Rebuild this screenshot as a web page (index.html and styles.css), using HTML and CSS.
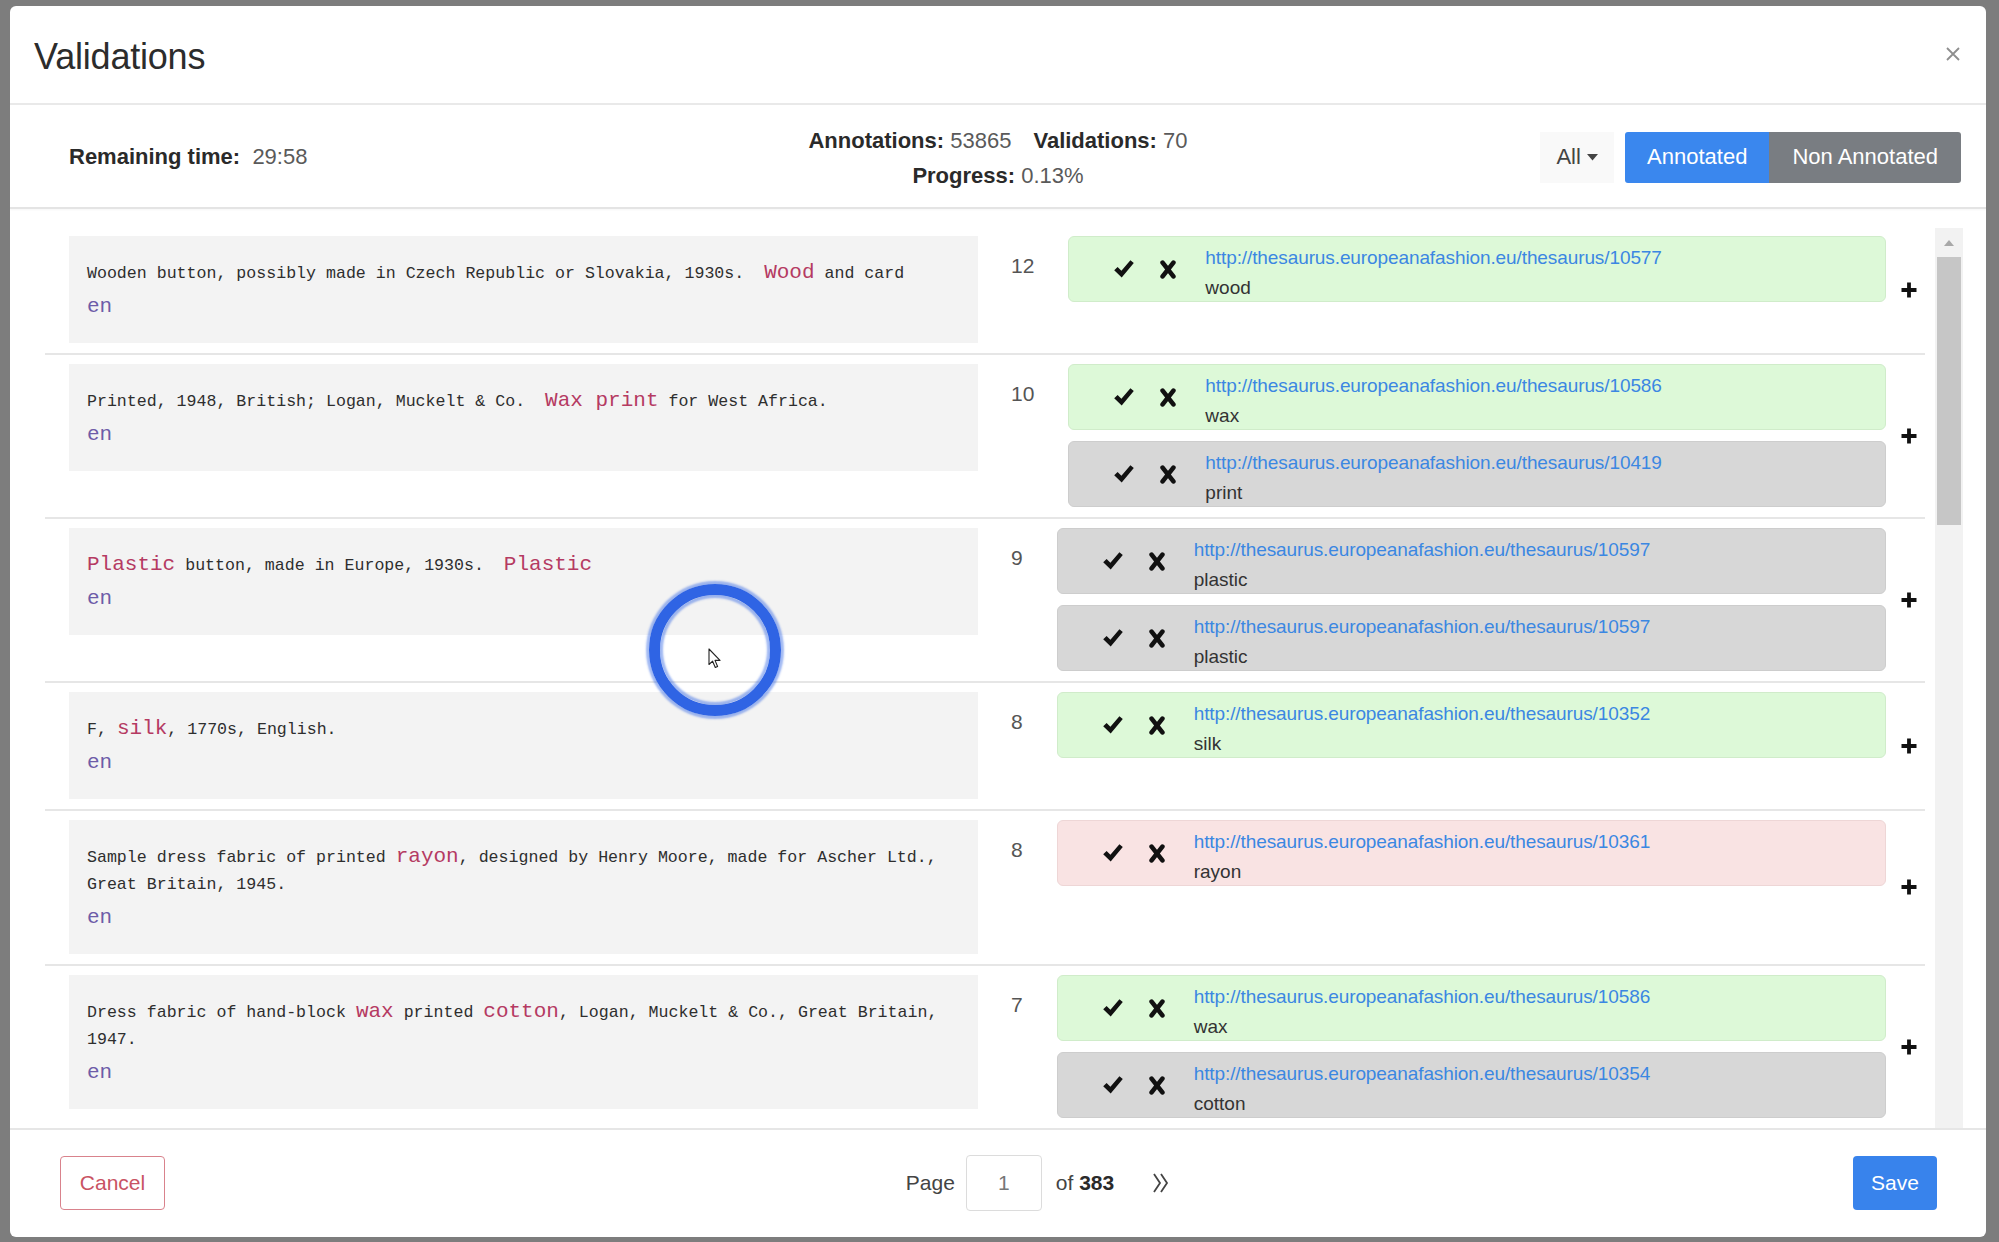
FILE: index.html
```html
<!DOCTYPE html>
<html lang="en">
<head>
<meta charset="utf-8">
<title>Validations</title>
<link rel="stylesheet" href="styles.css">
</head>
<body>
<div class="modal">
  <div class="modal-header">
    <h5 class="title">Validations</h5>
    <span class="close"><svg width="14" height="14" viewBox="0 0 14 14"><path d="M1 1L13 13M13 1L1 13" stroke="#8e8e8e" stroke-width="1.8"/></svg></span>
  </div>

  <div class="stats">
    <div class="time"><b>Remaining time:</b>&nbsp; <span class="val">29:58</span></div>
    <div class="counts">
      <div><b>Annotations:</b> <span class="val">53865</span><b class="gap">Validations:</b> <span class="val">70</span></div>
      <div><b>Progress:</b> <span class="val">0.13%</span></div>
    </div>
    <div class="filters">
      <span class="all">All <svg width="11" height="7" viewBox="0 0 11 7"><path d="M0 0H11L5.5 6.5Z" fill="#444"/></svg></span>
      <span class="btn btn-blue">Annotated</span><span class="btn btn-grey">Non Annotated</span>
    </div>
  </div>

  <div class="modal-body">
    <div class="list">

      <div class="row">
        <div class="textbox">
          <div class="desc">Wooden button, possibly made in Czech Republic or Slovakia, 1930s.  <span class="hl">Wood</span> and card</div>
          <div class="lang">en</div>
        </div>
        <div class="count">12</div>
        <div class="anns">
          <div class="ann green">
            <svg class="ico-check" width="22" height="20" viewBox="0 0 22 20"><path d="M1.2 11.2L4.6 7.9L8.4 11.8L17.4 1.2L20.8 4L8.7 18.6Z" fill="#111"/></svg>
            <svg class="ico-x" width="16" height="19" viewBox="0 0 16 19"><path d="M2.6 2.6L13.4 16.4M13.4 2.6L2.6 16.4" stroke="#111" stroke-width="4.6" stroke-linecap="round"/></svg>
            <div class="ann-text"><a class="url">http://thesaurus.europeanafashion.eu/thesaurus/10577</a><div class="label">wood</div></div>
          </div>
        </div>
        <div class="plus"><svg width="18" height="18" viewBox="0 0 18 18"><path d="M9 1.5V16.5M1.5 9H16.5" stroke="#111" stroke-width="3.8"/></svg></div>
      </div>

      <div class="row">
        <div class="textbox">
          <div class="desc">Printed, 1948, British; Logan, Muckelt &amp; Co.  <span class="hl">Wax print</span> for West Africa.</div>
          <div class="lang">en</div>
        </div>
        <div class="count">10</div>
        <div class="anns">
          <div class="ann green">
            <svg class="ico-check" width="22" height="20" viewBox="0 0 22 20"><path d="M1.2 11.2L4.6 7.9L8.4 11.8L17.4 1.2L20.8 4L8.7 18.6Z" fill="#111"/></svg>
            <svg class="ico-x" width="16" height="19" viewBox="0 0 16 19"><path d="M2.6 2.6L13.4 16.4M13.4 2.6L2.6 16.4" stroke="#111" stroke-width="4.6" stroke-linecap="round"/></svg>
            <div class="ann-text"><a class="url">http://thesaurus.europeanafashion.eu/thesaurus/10586</a><div class="label">wax</div></div>
          </div>
          <div class="ann grey">
            <svg class="ico-check" width="22" height="20" viewBox="0 0 22 20"><path d="M1.2 11.2L4.6 7.9L8.4 11.8L17.4 1.2L20.8 4L8.7 18.6Z" fill="#111"/></svg>
            <svg class="ico-x" width="16" height="19" viewBox="0 0 16 19"><path d="M2.6 2.6L13.4 16.4M13.4 2.6L2.6 16.4" stroke="#111" stroke-width="4.6" stroke-linecap="round"/></svg>
            <div class="ann-text"><a class="url">http://thesaurus.europeanafashion.eu/thesaurus/10419</a><div class="label">print</div></div>
          </div>
        </div>
        <div class="plus"><svg width="18" height="18" viewBox="0 0 18 18"><path d="M9 1.5V16.5M1.5 9H16.5" stroke="#111" stroke-width="3.8"/></svg></div>
      </div>

      <div class="row">
        <div class="textbox">
          <div class="desc"><span class="hl">Plastic</span> button, made in Europe, 1930s.  <span class="hl">Plastic</span></div>
          <div class="lang">en</div>
        </div>
        <div class="count">9</div>
        <div class="anns">
          <div class="ann grey">
            <svg class="ico-check" width="22" height="20" viewBox="0 0 22 20"><path d="M1.2 11.2L4.6 7.9L8.4 11.8L17.4 1.2L20.8 4L8.7 18.6Z" fill="#111"/></svg>
            <svg class="ico-x" width="16" height="19" viewBox="0 0 16 19"><path d="M2.6 2.6L13.4 16.4M13.4 2.6L2.6 16.4" stroke="#111" stroke-width="4.6" stroke-linecap="round"/></svg>
            <div class="ann-text"><a class="url">http://thesaurus.europeanafashion.eu/thesaurus/10597</a><div class="label">plastic</div></div>
          </div>
          <div class="ann grey">
            <svg class="ico-check" width="22" height="20" viewBox="0 0 22 20"><path d="M1.2 11.2L4.6 7.9L8.4 11.8L17.4 1.2L20.8 4L8.7 18.6Z" fill="#111"/></svg>
            <svg class="ico-x" width="16" height="19" viewBox="0 0 16 19"><path d="M2.6 2.6L13.4 16.4M13.4 2.6L2.6 16.4" stroke="#111" stroke-width="4.6" stroke-linecap="round"/></svg>
            <div class="ann-text"><a class="url">http://thesaurus.europeanafashion.eu/thesaurus/10597</a><div class="label">plastic</div></div>
          </div>
        </div>
        <div class="plus"><svg width="18" height="18" viewBox="0 0 18 18"><path d="M9 1.5V16.5M1.5 9H16.5" stroke="#111" stroke-width="3.8"/></svg></div>
      </div>

      <div class="row">
        <div class="textbox">
          <div class="desc">F, <span class="hl">silk</span>, 1770s, English.</div>
          <div class="lang">en</div>
        </div>
        <div class="count">8</div>
        <div class="anns">
          <div class="ann green">
            <svg class="ico-check" width="22" height="20" viewBox="0 0 22 20"><path d="M1.2 11.2L4.6 7.9L8.4 11.8L17.4 1.2L20.8 4L8.7 18.6Z" fill="#111"/></svg>
            <svg class="ico-x" width="16" height="19" viewBox="0 0 16 19"><path d="M2.6 2.6L13.4 16.4M13.4 2.6L2.6 16.4" stroke="#111" stroke-width="4.6" stroke-linecap="round"/></svg>
            <div class="ann-text"><a class="url">http://thesaurus.europeanafashion.eu/thesaurus/10352</a><div class="label">silk</div></div>
          </div>
        </div>
        <div class="plus"><svg width="18" height="18" viewBox="0 0 18 18"><path d="M9 1.5V16.5M1.5 9H16.5" stroke="#111" stroke-width="3.8"/></svg></div>
      </div>

      <div class="row">
        <div class="textbox">
          <div class="desc">Sample dress fabric of printed <span class="hl">rayon</span>, designed by Henry Moore, made for Ascher Ltd., Great Britain, 1945.</div>
          <div class="lang">en</div>
        </div>
        <div class="count">8</div>
        <div class="anns">
          <div class="ann pink">
            <svg class="ico-check" width="22" height="20" viewBox="0 0 22 20"><path d="M1.2 11.2L4.6 7.9L8.4 11.8L17.4 1.2L20.8 4L8.7 18.6Z" fill="#111"/></svg>
            <svg class="ico-x" width="16" height="19" viewBox="0 0 16 19"><path d="M2.6 2.6L13.4 16.4M13.4 2.6L2.6 16.4" stroke="#111" stroke-width="4.6" stroke-linecap="round"/></svg>
            <div class="ann-text"><a class="url">http://thesaurus.europeanafashion.eu/thesaurus/10361</a><div class="label">rayon</div></div>
          </div>
        </div>
        <div class="plus"><svg width="18" height="18" viewBox="0 0 18 18"><path d="M9 1.5V16.5M1.5 9H16.5" stroke="#111" stroke-width="3.8"/></svg></div>
      </div>

      <div class="row">
        <div class="textbox">
          <div class="desc">Dress fabric of hand-block <span class="hl">wax</span> printed <span class="hl">cotton</span>, Logan, Muckelt &amp; Co., Great Britain, 1947.</div>
          <div class="lang">en</div>
        </div>
        <div class="count">7</div>
        <div class="anns">
          <div class="ann green">
            <svg class="ico-check" width="22" height="20" viewBox="0 0 22 20"><path d="M1.2 11.2L4.6 7.9L8.4 11.8L17.4 1.2L20.8 4L8.7 18.6Z" fill="#111"/></svg>
            <svg class="ico-x" width="16" height="19" viewBox="0 0 16 19"><path d="M2.6 2.6L13.4 16.4M13.4 2.6L2.6 16.4" stroke="#111" stroke-width="4.6" stroke-linecap="round"/></svg>
            <div class="ann-text"><a class="url">http://thesaurus.europeanafashion.eu/thesaurus/10586</a><div class="label">wax</div></div>
          </div>
          <div class="ann grey">
            <svg class="ico-check" width="22" height="20" viewBox="0 0 22 20"><path d="M1.2 11.2L4.6 7.9L8.4 11.8L17.4 1.2L20.8 4L8.7 18.6Z" fill="#111"/></svg>
            <svg class="ico-x" width="16" height="19" viewBox="0 0 16 19"><path d="M2.6 2.6L13.4 16.4M13.4 2.6L2.6 16.4" stroke="#111" stroke-width="4.6" stroke-linecap="round"/></svg>
            <div class="ann-text"><a class="url">http://thesaurus.europeanafashion.eu/thesaurus/10354</a><div class="label">cotton</div></div>
          </div>
        </div>
        <div class="plus"><svg width="18" height="18" viewBox="0 0 18 18"><path d="M9 1.5V16.5M1.5 9H16.5" stroke="#111" stroke-width="3.8"/></svg></div>
      </div>

    </div>
    <div class="scrollbar">
      <div class="sb-arrow"><svg width="10" height="6" viewBox="0 0 10 6"><path d="M0 6L5 0L10 6Z" fill="#a8a8a8"/></svg></div>
      <div class="sb-thumb"></div>
    </div>
  </div>

  <div class="modal-footer">
    <span class="btn-cancel">Cancel</span>
    <div class="pager">
      <span>Page</span>
      <span class="page-input">1</span>
      <span>of <b>383</b></span>
      <svg class="next" width="18" height="22" viewBox="0 0 18 22"><path d="M2 2L8 11L2 20M9 2L15 11L9 20" stroke="#444" stroke-width="1.8" fill="none"/></svg>
    </div>
    <span class="btn-save">Save</span>
  </div>

  <div class="click-ring"></div>
  <svg class="cursor" width="14" height="21" viewBox="0 0 14 21"><path d="M1 1V16.5L4.6 13.2L7.3 19.5L9.6 18.5L7 12.4H12Z" fill="#fff" stroke="#222" stroke-width="1.1" stroke-linejoin="round"/></svg>
</div>
</body>
</html>
```

FILE: styles.css
```css
* { box-sizing: border-box; }

html, body {
  margin: 0;
  height: 1242px;
  overflow: hidden;
}

body {
  background: #7d7d7d;
  padding: 6px 13px 5px 10px;
  font-family: "Liberation Sans", Arial, sans-serif;
  color: #333;
}

.modal {
  position: relative;
  height: 1231px;
  background: #fff;
  border-radius: 6px;
  display: flex;
  flex-direction: column;
  overflow: hidden;
}

/* header */
.modal-header {
  height: 99px;
  flex: none;
  display: flex;
  align-items: center;
  justify-content: space-between;
  padding: 4px 26px 0 24px;
  border-bottom: 2px solid #e9e9e9;
}

.title {
  margin: 0;
  font-size: 36px;
  font-weight: normal;
  color: #2c2c2c;
  letter-spacing: -0.2px;
}

.close {
  display: flex;
  margin-top: -6px;
}

/* stats */
.stats {
  height: 104px;
  flex: none;
  display: grid;
  grid-template-columns: 1fr auto 1fr;
  align-items: center;
  padding: 0 25px;
  border-bottom: 2px solid #e4e4e4;
  box-shadow: 0 1px 2px rgba(0,0,0,0.04);
  font-size: 22px;
}

.time { padding: 2px 0 0 34px; }

.stats b { color: #2a2a2a; }
.stats .val { color: #5a5a5a; }

.counts {
  text-align: center;
  line-height: 35px;
  margin-top: 4px;
}

.counts .gap { margin-left: 22px; }

.filters {
  display: flex;
  justify-content: flex-end;
  align-items: center;
  padding-top: 2px;
}

.all {
  width: 74px;
  height: 51px;
  display: flex;
  align-items: center;
  justify-content: center;
  gap: 6px;
  background: #f9f9f9;
  color: #444;
  margin-right: 11px;
}

.btn {
  height: 51px;
  display: flex;
  align-items: center;
  padding: 0 22px;
  color: #fff;
  font-size: 22px;
}

.btn-blue { background: #3a87ee; border-radius: 3px 0 0 3px; }
.btn-grey { background: #797d82; border-radius: 0 3px 3px 0; padding: 0 23px; }

/* body */
.modal-body {
  flex: 1;
  display: flex;
  padding-left: 35px;
  overflow: hidden;
}

.list {
  flex: 1;
  padding-top: 18px;
  overflow: hidden;
}

.row {
  display: flex;
  align-items: flex-start;
  padding: 9px 0 10px 24px;
  border-bottom: 2px solid #e6e6e6;
}

.textbox {
  width: 909px;
  flex: none;
  background: #f3f3f3;
  padding: 24px 18px 21px;
}

.desc {
  font-family: "Liberation Mono", "Courier New", monospace;
  font-size: 16.6px;
  line-height: 27px;
  white-space: pre-wrap;
  color: #2e2e2e;
}

.hl {
  font-size: 21px;
  line-height: 1;
  color: #b53a62;
}

.lang {
  margin-top: 5px;
  font-family: "Liberation Mono", "Courier New", monospace;
  font-size: 21px;
  line-height: 30px;
  color: #6d5ca8;
}

.count {
  flex: none;
  margin: 18px 34px 0 33px;
  font-size: 21px;
  line-height: 24px;
  color: #555;
}

.anns {
  flex: 1;
  display: flex;
  flex-direction: column;
  gap: 11px;
}

.ann {
  height: 66px;
  display: flex;
  align-items: center;
  padding-left: 44px;
  border: 1px solid transparent;
  border-radius: 6px;
}

.ann.green { background: #ddf9d8; border-color: #d0ecca; }
.ann.grey { background: #d7d7d7; border-color: #cdcdcd; }
.ann.pink { background: #f9e3e3; border-color: #eed6d6; }

.ico-check { flex: none; margin-right: 25px; }
.ico-x { flex: none; margin-right: 29px; }

.ann-text {
  align-self: flex-start;
  margin-top: 8px;
  font-size: 19px;
}

.url {
  display: block;
  line-height: 26px;
  color: #3b87e2;
  letter-spacing: -0.1px;
}

.label {
  margin-top: 4px;
  line-height: 26px;
  color: #333;
}

.plus {
  width: 39px;
  flex: none;
  align-self: center;
  display: flex;
  padding-left: 14px;
}

/* fake scrollbar */
.scrollbar {
  width: 28px;
  flex: none;
  margin: 19px 23px 0 10px;
  background: #f2f2f2;
  display: flex;
  flex-direction: column;
  align-items: center;
}

.sb-arrow {
  height: 29px;
  display: flex;
  align-items: center;
}

.sb-thumb {
  width: 24px;
  height: 268px;
  background: #c6c6c6;
}

/* footer */
.modal-footer {
  height: 109px;
  flex: none;
  display: flex;
  align-items: center;
  justify-content: space-between;
  padding: 0 49px 2px 50px;
  border-top: 2px solid #e6e6e6;
  font-size: 21px;
}

.btn-cancel {
  height: 54px;
  width: 105px;
  display: flex;
  align-items: center;
  justify-content: center;
  border: 1px solid #d9828c;
  border-radius: 4px;
  color: #c95363;
}

.btn-save {
  height: 54px;
  width: 84px;
  display: flex;
  align-items: center;
  justify-content: center;
  background: #3883ec;
  border-radius: 4px;
  color: #fff;
}

.pager {
  display: flex;
  align-items: center;
  margin-left: 58px;
  color: #444;
}

.pager b { color: #2a2a2a; }

.page-input {
  width: 76px;
  height: 56px;
  margin: 0 14px 0 11px;
  display: flex;
  align-items: center;
  justify-content: center;
  border: 1px solid #dcdcdc;
  border-radius: 4px;
  color: #777;
}

.next { margin-left: 38px; }

/* click highlight overlay */
.click-ring {
  position: absolute;
  left: 639px;
  top: 578px;
  width: 132px;
  height: 132px;
  border-radius: 50%;
  border: 11px solid #2f64e4;
  box-shadow: 0 0 2px 3px rgba(47, 100, 228, 0.45), inset 0 0 2px 3px rgba(47, 100, 228, 0.45);
}

.cursor {
  position: absolute;
  left: 698px;
  top: 642px;
}
```
